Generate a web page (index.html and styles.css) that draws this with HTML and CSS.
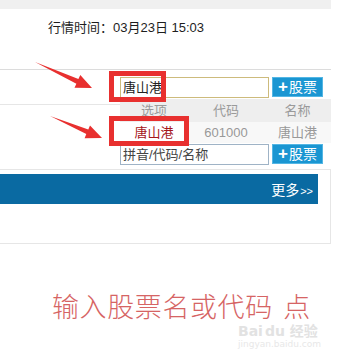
FILE: index.html
```html
<!DOCTYPE html>
<html lang="zh">
<head>
<meta charset="utf-8">
<title>行情</title>
<link rel="stylesheet" href="styles.css">
</head>
<body>
<div class="page">
  <div class="topband"></div>
  <div class="time">行情时间：03月23日 15:03</div>
  <div class="sec sec1">
    <div class="search">
      <div class="input input-active">唐山港</div>
      <div class="btn"><span class="plus">+</span>股票</div>
    </div>
  </div>
  <div class="sec sec2">
    <div class="search">
      <div class="input input-idle">拼音/代码/名称</div>
      <div class="btn"><span class="plus">+</span>股票</div>
    </div>
  </div>
  <div class="panel">
    <div class="bar"><span class="more">更多<small>&gt;&gt;</small></span></div>
  </div>
  <div class="note">输入股票名或代码 点</div>

  <div class="dropdown">
    <div class="drow dhead"><span>选项</span><span>代码</span><span>名称</span></div>
    <div class="drow dbody"><span class="hit">唐山港</span><span>601000</span><span>唐山港</span></div>
  </div>

  <div class="hl hl1"></div>
  <div class="hl hl2"></div>

  <svg class="arrows" width="355" height="360" viewBox="0 0 355 360">
    <polygon points="35,62 78.4,79.1 80.3,75 92,88 74.5,87.8 76.4,83.7" fill="#e8302f"/>
    <polygon points="50,116 88.3,129.5 90,125.4 102,138 84.6,138.2 86.3,134.1" fill="#e8302f"/>
  </svg>

  <div class="wm"><div class="wm1">Bai<span>du</span> 经验</div><div class="wm2">jingyan.baidu.com</div></div>
</div>
</body>
</html>
```
FILE: styles.css
```css
html, body {
  margin: 0;
  padding: 0;
  background: #fff;
}
body {
  font-family: "Liberation Sans", "Noto Sans CJK SC", sans-serif;
  color: #222;
}
.page {
  position: relative;
  width: 355px;
  height: 360px;
  overflow: hidden;
}
.topband {
  width: 331px;
  height: 9px;
  background: #f0f0f0;
}
.time {
  height: 60px;
  box-sizing: border-box;
  padding: 11px 0 0 48px;
  font-size: 13px;
  line-height: 15px;
  color: #1e1e1e;
}
.sec {
  width: 331px;
  box-sizing: border-box;
  border-top: 1px solid #dcdcdc;
}
.sec1 {
  height: 35px;
  padding-top: 7px;
}
.sec2 {
  height: 65px;
  padding-top: 39px;
  border-top-color: #e6e6e6;
}
.search {
  display: flex;
  align-items: flex-start;
  padding-left: 120px;
}
.input {
  width: 149px;
  height: 21px;
  box-sizing: border-box;
  font-size: 13px;
  line-height: 19px;
  padding-left: 2px;
  background: #fff;
}
.input-active {
  border: 1px solid #cdbb7c;
  color: #222;
}
.input-idle {
  border: 1px solid #9fb3c6;
  color: #444;
}
.btn {
  margin-left: 3px;
  width: 51px;
  height: 20px;
  box-sizing: border-box;
  background: #1a96d2;
  border: 1px solid #53b6e4;
  color: #fff;
  font-size: 14px;
  line-height: 18px;
  text-align: center;
}
.plus {
  font-weight: bold;
  font-size: 17px;
  margin-right: 1px;
}
.panel {
  width: 331px;
  height: 75px;
  box-sizing: border-box;
  border-top: 1px solid #e6e6e6;
  border-right: 1px solid #e6e6e6;
  border-bottom: 1px solid #e6e6e6;
  padding-top: 4px;
}
.bar {
  width: 318px;
  height: 30px;
  background: #0a6aa2;
  display: flex;
  justify-content: flex-end;
  align-items: center;
}
.more {
  color: #fff;
  font-size: 14px;
  margin-right: 5px;
}
.more small {
  font-size: 11px;
  margin-left: 1px;
}
.note {
  margin-top: 47px;
  padding-left: 52px;
  font-size: 27px;
  line-height: 30px;
  letter-spacing: 0.6px;
  color: #d66464;
  font-family: "Noto Sans CJK SC", sans-serif;
  font-weight: 300;
  word-spacing: 4px;
}
.dropdown {
  position: absolute;
  left: 120px;
  top: 99px;
  width: 211px;
  font-size: 13px;
}
.drow {
  display: grid;
  grid-template-columns: 68px 76px 67px;
  text-align: center;
}
.dhead {
  height: 23px;
  line-height: 23px;
  background: #eeeeee;
  color: #9a9a9a;
}
.dbody {
  height: 21px;
  line-height: 21px;
  background: #f8f8f8;
  color: #999;
}
.dbody .hit {
  color: #a4161a;
  background: #fff;
}
.hl {
  position: absolute;
  border: 5px solid #e8302f;
  box-sizing: border-box;
}
.hl1 {
  left: 109px;
  top: 71px;
  width: 57px;
  height: 31px;
}
.hl2 {
  left: 109px;
  top: 116px;
  width: 80px;
  height: 30px;
}
.arrows {
  position: absolute;
  left: 0;
  top: 0;
}
.wm {
  position: absolute;
  left: 238px;
  top: 324px;
  color: #e2e2e2;
  font-family: "DejaVu Sans", "Noto Sans CJK SC", sans-serif;
}
.wm1 {
  font-size: 14px;
  line-height: 14px;
  font-weight: bold;
}
.wm1 span {
  margin-left: 2px;
}
.wm2 {
  font-size: 9px;
  line-height: 12px;
  color: #e8e8e8;
}
```
